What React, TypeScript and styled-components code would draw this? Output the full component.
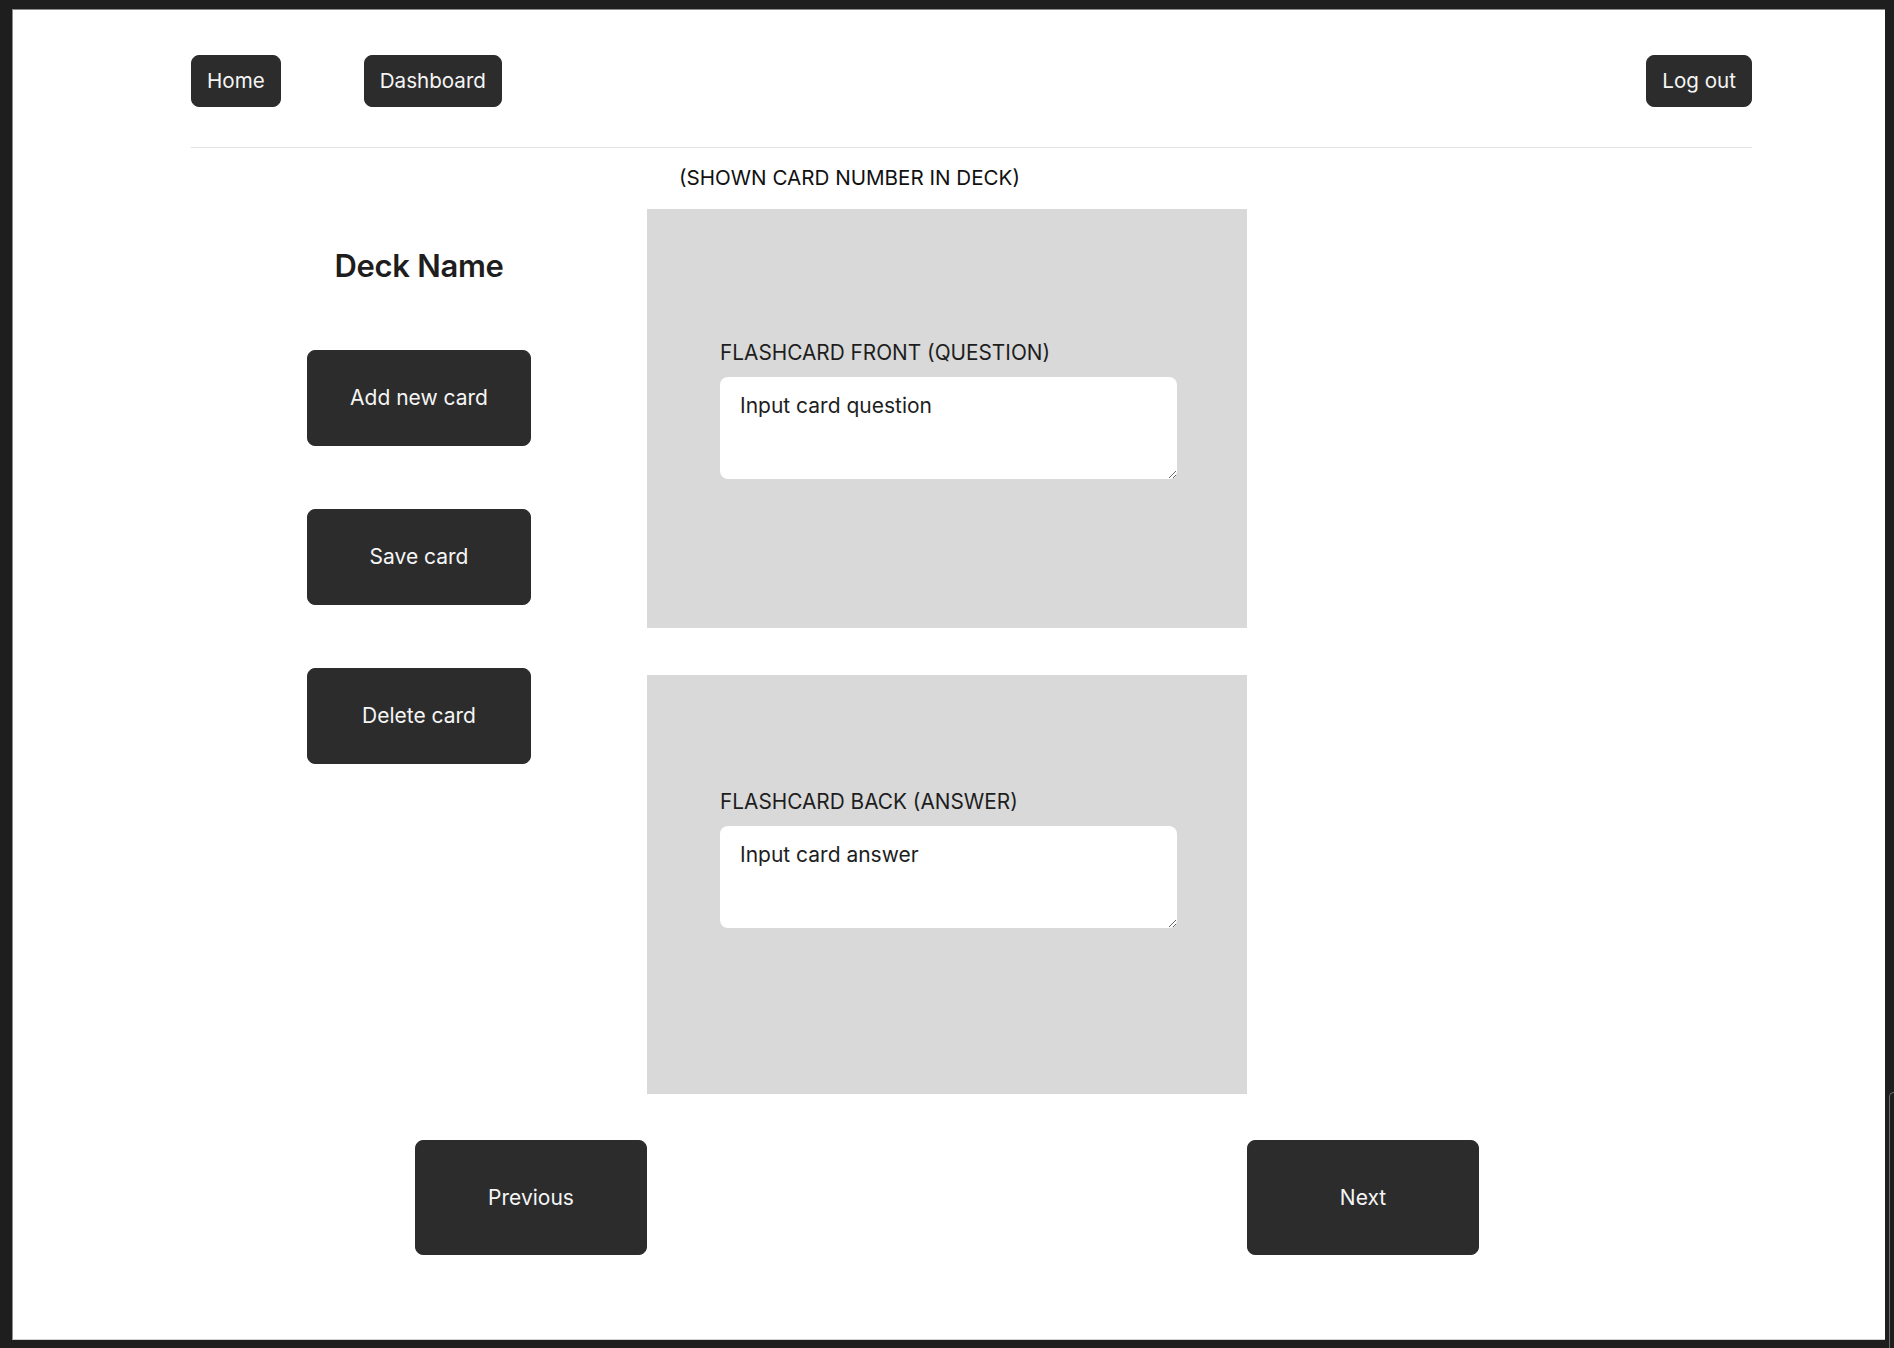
import React from "react";
import styled, { createGlobalStyle } from "styled-components";

const GlobalStyle = createGlobalStyle`
  html, body {
    margin: 0;
    padding: 0;
    background: #1e1e1e;
  }
  body {
    font-family: Inter, "Noto Sans", "Liberation Sans", sans-serif;
    color: #1e1e1e;
    -webkit-font-smoothing: antialiased;
  }
  * { box-sizing: border-box; }
`;

const Window = styled.div`
  position: relative;
  width: 1894px;
  height: 1348px;
  padding: 9px 9px 8px 12px;
`;

const Frame = styled.div`
  height: 100%;
  background: #ffffff;
  border-left: 1px solid #8c8c8c;
  border-top: 1px solid #8c8c8c;
  border-bottom: 1px solid #d0d0d0;
  padding: 45px 0 0 178px;
`;

const ScrollEdge = styled.div`
  position: absolute;
  left: 1889px;
  top: 1092px;
  width: 8px;
  height: 260px;
  border: 1px solid #6b6b6b;
  border-right: none;
  border-bottom: none;
  border-top-left-radius: 5px;
`;

const Content = styled.div`
  width: 1561px;
`;

const Header = styled.header`
  display: flex;
  align-items: center;
  gap: 83px;
  padding-bottom: 40px;
  border-bottom: 1px solid #e3e3e3;
`;

const NavButton = styled.button<{ $push?: boolean }>`
  height: 52px;
  padding: 0 15px;
  margin-left: ${(p) => (p.$push ? "auto" : "0")};
  background: #2c2c2c;
  color: #f5f5f5;
  border: 1px solid #2c2c2c;
  border-radius: 8px;
  font-family: Inter, "Noto Sans", sans-serif;
  font-size: 20.6px;
  line-height: 24px;
  cursor: pointer;
`;

const Body = styled.main`
  display: grid;
  grid-template-columns: 456px 600px 1fr;
  grid-template-areas:
    ".     count  ."
    "side  cards  ."
    "prev  .      next";
  padding-top: 18px;
`;

const CardCount = styled.div`
  grid-area: count;
  padding-left: 32px;
  font-size: 20.6px;
  line-height: 24px;
  color: #111111;
  margin-bottom: 19px;
`;

const Sidebar = styled.aside`
  grid-area: side;
  display: flex;
  flex-direction: column;
  align-items: center;
  padding-top: 39px;
`;

const DeckTitle = styled.h1`
  margin: 0 0 66px;
  font-size: 31px;
  line-height: 36px;
  font-weight: 600;
  color: #1e1e1e;
  letter-spacing: -0.3px;
`;

const ActionList = styled.div`
  display: flex;
  flex-direction: column;
  gap: 63px;
`;

const BigButton = styled.button<{ $w: number; $h: number }>`
  width: ${(p) => p.$w}px;
  height: ${(p) => p.$h}px;
  background: #2c2c2c;
  color: #f5f5f5;
  border: 1px solid #2c2c2c;
  border-radius: 8px;
  font-family: Inter, "Noto Sans", sans-serif;
  font-size: 21px;
  line-height: 24px;
  cursor: pointer;
`;

const Cards = styled.section`
  grid-area: cards;
  display: flex;
  flex-direction: column;
  gap: 47px;
`;

const Card = styled.div<{ $top: number }>`
  height: 419px;
  background: #d9d9d9;
  padding: ${(p) => p.$top}px 70px 0 73px;
  display: flex;
  flex-direction: column;
`;

const FieldLabel = styled.label`
  font-size: 20.8px;
  line-height: 24px;
  color: #1e1e1e;
  margin-bottom: 12px;
`;

const TextArea = styled.textarea`
  width: 457px;
  height: 102px;
  border: none;
  border-radius: 8px;
  background: #ffffff;
  padding: 17px 20px;
  font-family: Inter, "Noto Sans", sans-serif;
  font-size: 21px;
  line-height: 24px;
  color: #1e1e1e;
  outline: none;
  &::placeholder {
    color: #1e1e1e;
    opacity: 1;
  }
`;

const PrevCell = styled.div`
  grid-area: prev;
  display: flex;
  justify-content: flex-end;
  padding-top: 46px;
`;

const NextCell = styled.div`
  grid-area: next;
  display: flex;
  justify-content: flex-start;
  padding-top: 46px;
`;

export default function App() {
  return (
    <>
      <GlobalStyle />
      <Window>
        <Frame>
          <Content>
            <Header>
              <NavButton>Home</NavButton>
              <NavButton>Dashboard</NavButton>
              <NavButton $push>Log out</NavButton>
            </Header>
            <Body>
              <CardCount>(SHOWN CARD NUMBER IN DECK)</CardCount>
              <Sidebar>
                <DeckTitle>Deck Name</DeckTitle>
                <ActionList>
                  <BigButton $w={224} $h={96}>Add new card</BigButton>
                  <BigButton $w={224} $h={96}>Save card</BigButton>
                  <BigButton $w={224} $h={96}>Delete card</BigButton>
                </ActionList>
              </Sidebar>
              <Cards>
                <Card $top={132}>
                  <FieldLabel htmlFor="front">FLASHCARD FRONT (QUESTION)</FieldLabel>
                  <TextArea id="front" placeholder="Input card question" />
                </Card>
                <Card $top={115}>
                  <FieldLabel htmlFor="back">FLASHCARD BACK (ANSWER)</FieldLabel>
                  <TextArea id="back" placeholder="Input card answer" />
                </Card>
              </Cards>
              <PrevCell>
                <BigButton $w={232} $h={115}>Previous</BigButton>
              </PrevCell>
              <NextCell>
                <BigButton $w={232} $h={115}>Next</BigButton>
              </NextCell>
            </Body>
          </Content>
        </Frame>
        <ScrollEdge />
      </Window>
    </>
  );
}
